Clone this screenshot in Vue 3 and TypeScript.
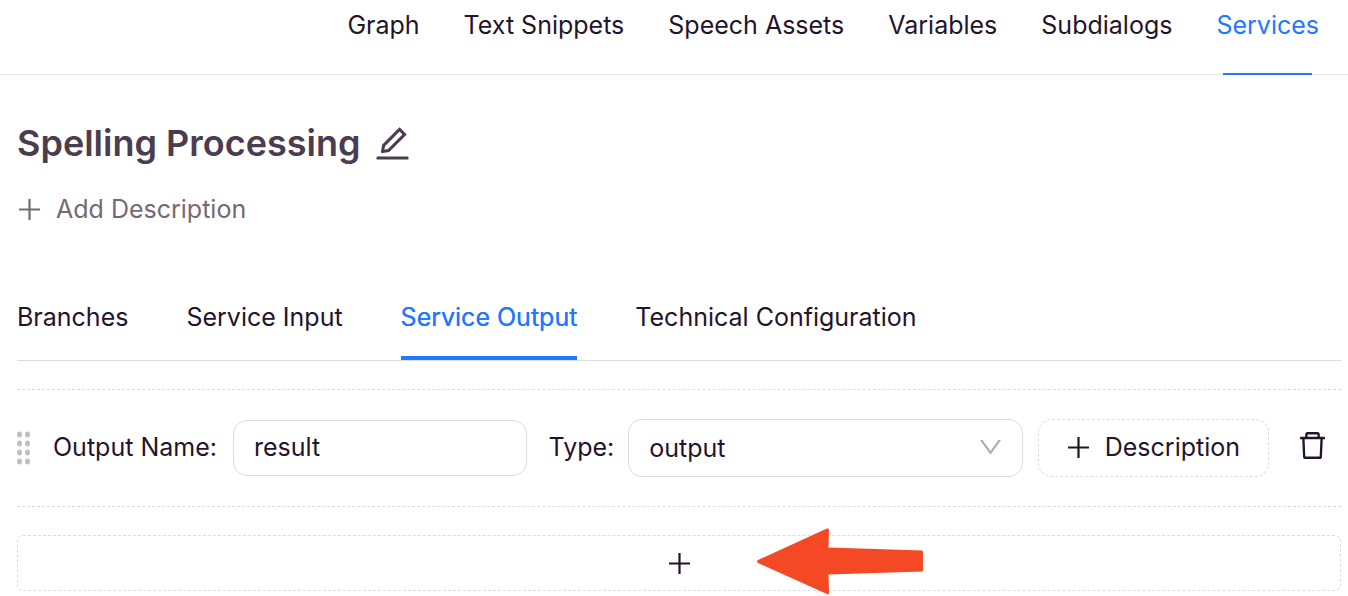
<script setup lang="ts">
import { ref } from 'vue'

const navItems: string[] = ['Graph', 'Text Snippets', 'Speech Assets', 'Variables', 'Subdialogs', 'Services']
const tabs: string[] = ['Branches', 'Service Input', 'Service Output', 'Technical Configuration']

const activeNav = ref('Services')
const activeTab = ref('Service Output')
const outputName = ref('result')
const outputType = ref('output')

const plusPath =
  'M482 152h60q8 0 8 8v704q0 8-8 8h-60q-8 0-8-8V160q0-8 8-8z M160 474h704q8 0 8 8v60q0 8-8 8H160q-8 0-8-8v-60q0-8 8-8z'
</script>

<template>
  <div class="page">
    <nav class="topnav" aria-label="Main">
      <a
        v-for="item in navItems"
        :key="item"
        href="#"
        class="nav-link"
        :class="{ active: item === activeNav }"
        @click.prevent="activeNav = item"
      >{{ item }}</a>
    </nav>

    <main class="content">
      <div class="title-row">
        <h1>Spelling Processing</h1>
        <button type="button" class="plain edit" aria-label="Edit name">
          <svg viewBox="0 0 1024 1024" width="41" height="41" fill="currentColor">
            <path d="M257.7 752c2 0 4-.2 6-.5L431.9 722c2-.4 3.9-1.3 5.3-2.8l423.9-423.9a9.96 9.96 0 000-14.1L694.9 114.9c-1.9-1.9-4.4-2.9-7.1-2.9s-5.2 1-7.1 2.9L256.8 538.8c-1.5 1.5-2.4 3.3-2.8 5.3l-29.5 168.2a33.5 33.5 0 009.4 29.8c6.6 6.4 14.9 9.9 23.8 9.9zm67.4-174.4L687.8 215l73.3 73.3-362.7 362.6-88.9 15.7 15.6-89zM880 836H144c-17.7 0-32 14.3-32 32v36c0 4.4 3.6 8 8 8h784c4.4 0 8-3.6 8-8v-36c0-17.7-14.3-32-32-32z" />
          </svg>
        </button>
      </div>

      <button type="button" class="plain add-description">
        <svg viewBox="152 152 720 720" width="21" height="21" fill="currentColor"><path :d="plusPath" /></svg>
        <span>Add Description</span>
      </button>

      <div class="tabs" role="tablist">
        <button
          v-for="tab in tabs"
          :key="tab"
          type="button"
          role="tab"
          class="plain tab"
          :class="{ active: tab === activeTab }"
          :aria-selected="tab === activeTab"
          @click="activeTab = tab"
        >{{ tab }}</button>
      </div>

      <div class="output-row">
        <svg class="grip" viewBox="0 0 14 34" width="14" height="34" fill="#bfbfbf">
          <template v-for="n in 4" :key="n">
            <ellipse cx="2.5" :cy="n * 9 - 5.5" rx="2.5" ry="2.9" />
            <ellipse cx="10.5" :cy="n * 9 - 5.5" rx="2.5" ry="2.9" />
          </template>
        </svg>
        <label for="output-name">Output Name:</label>
        <input id="output-name" v-model="outputName" type="text" class="field name" />
        <label for="output-type">Type:</label>
        <div class="select-wrap">
          <select id="output-type" v-model="outputType" class="field">
            <option value="output">output</option>
          </select>
          <svg class="chevron" viewBox="132 256 760 512" width="21" height="14" fill="currentColor">
            <path d="M884 256h-75c-5.1 0-9.9 2.5-12.9 6.6L512 654.2 227.9 262.6c-3-4.1-7.8-6.6-12.9-6.6h-75c-6.5 0-10.3 7.4-6.5 12.7l352.6 486.1c12.8 17.6 39 17.6 51.7 0l352.6-486.1c3.9-5.3.1-12.7-6.4-12.7z" />
          </svg>
        </div>
        <button type="button" class="description">
          <svg viewBox="152 152 720 720" width="21" height="21" fill="currentColor"><path :d="plusPath" /></svg>
          <span>Description</span>
        </button>
        <button type="button" class="plain trash" aria-label="Delete output">
          <svg viewBox="128 112 768 800" width="25" height="27" preserveAspectRatio="none" fill="currentColor">
            <path d="M360 184h-8c4.4 0 8-3.6 8-8v8h304v-8c0 4.4 3.6 8 8 8h-8v72h72v-80c0-35.3-28.7-64-64-64H352c-35.3 0-64 28.7-64 64v80h72v-72zm504 72H160c-17.7 0-32 14.3-32 32v32c0 4.4 3.6 8 8 8h60.4l24.7 523c1.6 34.1 29.8 61 63.9 61h454c34.2 0 62.3-26.8 63.9-61l24.7-523H888c4.4 0 8-3.6 8-8v-32c0-17.7-14.3-32-32-32zM731.3 840H292.7l-24.2-512h487l-24.2 512z" />
          </svg>
        </button>
      </div>

      <div class="add-wrap">
        <button type="button" class="add-output" aria-label="Add output">
          <svg viewBox="152 152 720 720" width="21" height="21" fill="currentColor"><path :d="plusPath" /></svg>
        </button>
        <svg class="arrow" viewBox="0 0 167 67" width="167" height="67" fill="#f54824" aria-hidden="true">
          <path d="M1 32 L70 .5 Q72 0 72 2 L71.500 19.500 L165 22.500 Q166 23 166 24 V42 Q166 43.500 165 43.500 L71.500 46.500 L72 65 Q72 67 70 66 L1 35 Q-1 33.500 1 32Z" />
        </svg>
      </div>
    </main>
  </div>
</template>

<style>
body {
  margin: 0;
  background: #fff;
}
</style>

<style scoped>
.page {
  font-family: Inter, "Liberation Sans", sans-serif;
  font-size: 25px;
  line-height: 40px;
  color: #23142b;
}
.page * {
  box-sizing: border-box;
}
svg {
  display: block;
  flex: none;
}
button,
input,
select {
  font: inherit;
  color: inherit;
}
.plain {
  padding: 0;
  border: 0;
  background: none;
}
.topnav {
  display: flex;
  justify-content: flex-end;
  gap: 44px;
  height: 75px;
  padding: 5px 29px 0;
  border-bottom: 1px solid #e8e8e8;
}
.nav-link {
  position: relative;
  color: inherit;
  text-decoration: none;
  white-space: nowrap;
}
.nav-link.active {
  color: #2478ff;
}
.nav-link.active::after {
  content: "";
  position: absolute;
  left: 7px;
  right: 7px;
  bottom: -1px;
  height: 2px;
  background: #2478ff;
}
.content {
  padding: 44px 7px 5px 17px;
}
.title-row {
  display: flex;
  align-items: center;
  gap: 12px;
  height: 48px;
  color: #4b3c50;
}
h1 {
  margin: 0;
  font-size: 36px;
  font-weight: 600;
  line-height: 48px;
}
.add-description {
  display: flex;
  align-items: center;
  gap: 16px;
  margin-top: 22px;
  padding-left: 2px;
  color: #736a76;
}
.tabs {
  display: flex;
  gap: 58px;
  height: 72px;
  margin-top: 60px;
  border-bottom: 1px solid #dcdcdc;
}
.tab {
  position: relative;
  padding-bottom: 15px;
  white-space: nowrap;
}
.tab.active {
  color: #2478ff;
  text-shadow: 0 0 0.25px currentColor;
}
.tab.active::after {
  content: "";
  position: absolute;
  left: 0;
  right: 0;
  bottom: 0;
  height: 4px;
  background: #2478ff;
}
.output-row {
  display: flex;
  align-items: center;
  height: 118px;
  margin-top: 28px;
  border-top: 1px dashed #dcdcdc;
  border-bottom: 1px dashed #dcdcdc;
}
.output-row label {
  padding-bottom: 2px;
  white-space: nowrap;
}
.grip {
  margin-right: 22px;
}
.field {
  min-width: 0;
  height: 56px;
  padding: 0 20px;
  border: 1px solid #dcdcdc;
  border-radius: 14px;
  background: #fff;
  outline: none;
}
.name {
  flex: 252 1 0;
  margin: 0 22px 0 16px;
  padding-bottom: 2px;
}
.select-wrap {
  position: relative;
  flex: 395 1 0;
  min-width: 0;
  margin: 0 15px 0 14px;
}
.select-wrap .field {
  display: block;
  width: 100%;
  height: 58px;
  appearance: none;
}
.chevron {
  position: absolute;
  right: 22px;
  top: 21px;
  color: #b0abb3;
  pointer-events: none;
}
.description {
  display: flex;
  align-items: center;
  gap: 16px;
  height: 58px;
  padding: 0 28px 2px 29px;
  border: 1px dashed #dcdcdc;
  border-radius: 14px;
  background: #fff;
}
.trash {
  margin: 0 16px 0 31px;
  padding-bottom: 5px;
}
.add-wrap {
  position: relative;
  margin-top: 28px;
}
.add-output {
  display: flex;
  align-items: center;
  justify-content: center;
  width: 100%;
  height: 56px;
  border: 1px dashed #dcdcdc;
  border-radius: 6px;
  background: #fff;
}
.arrow {
  position: absolute;
  top: -7px;
  left: calc(50% + 78px);
  pointer-events: none;
}
</style>
